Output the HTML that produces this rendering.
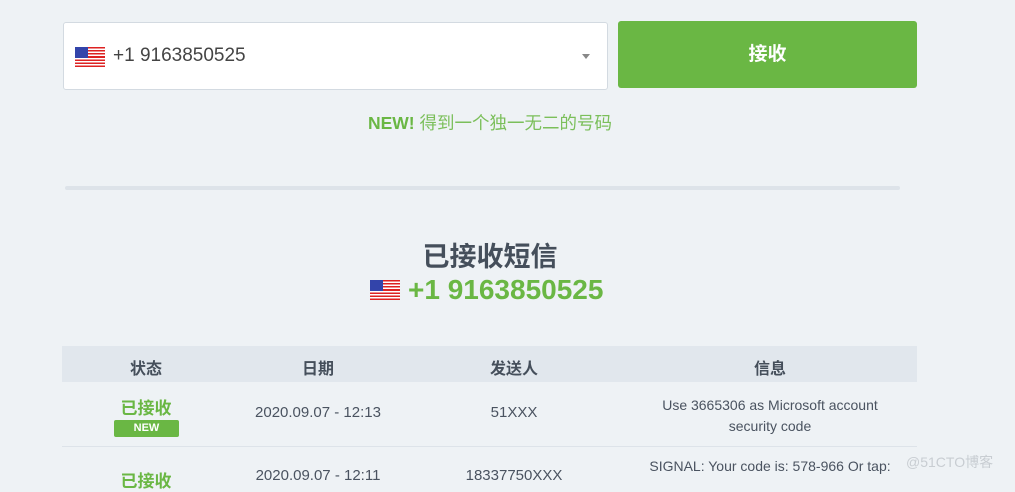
<!DOCTYPE html>
<html><head><meta charset="utf-8"><style>
body{margin:0;width:1015px;height:479px;overflow:hidden;background:#eef2f5;font-family:"Liberation Sans","Noto Sans CJK SC",sans-serif;position:relative;color:#4a5360}
.abs{position:absolute}
.flag{display:inline-block;width:30px;height:20px;background:repeating-linear-gradient(#d22 0 1.54px,#fff 1.54px 3.08px);position:relative}
.flag:before{content:"";position:absolute;left:0;top:0;width:13px;height:11px;background:#3344aa}
.input{left:63px;top:22px;width:543px;height:66px;background:#fff;border:1px solid #d3dae1;border-radius:3px}
.btn{left:618px;top:21px;width:299px;height:67px;background:#6ab744;border-radius:3px;color:#fff;font-weight:bold;font-size:19px;text-align:center;line-height:67px}
</style></head><body>
<div class="abs input">
 <span class="flag abs" style="left:11px;top:24px"></span>
 <span class="abs" style="left:49px;top:22px;font-size:19px;color:#444">+1 9163850525</span>
 <span class="abs" style="left:518px;top:31px;width:0;height:0;border-left:4px solid transparent;border-right:4px solid transparent;border-top:5px solid #888"></span>
</div>
<div class="abs btn">接收</div>
<div class="abs" style="left:0;width:980px;top:110px;text-align:center;font-size:17.5px;color:#7bbf5a"><b style="color:#6ab744">NEW!</b> 得到一个独一无二的号码</div>
<div class="abs" style="left:65px;top:186px;width:835px;height:4px;background:#dde3e9;border-radius:2px"></div>
<div class="abs" style="left:0;width:980px;top:235px;text-align:center;font-size:27px;font-weight:bold;color:#454f5b">已接收短信</div>
<div class="abs" style="left:370px;top:274px;font-size:28px;font-weight:bold;color:#6ab744;white-space:nowrap"><span class="flag" style="vertical-align:-1px;margin-right:8px"></span>+1 9163850525</div>
<div class="abs" style="left:62px;top:346px;width:855px;height:36px;background:#e1e7ed"></div>
<div class="abs" style="left:62px;top:446px;width:855px;height:1px;background:#dde3e9"></div>
<div class="abs" style="left:106px;width:80px;text-align:center;top:355px;font-size:16px;font-weight:bold;color:#454f5b">状态</div>
<div class="abs" style="left:278px;width:80px;text-align:center;top:355px;font-size:16px;font-weight:bold;color:#454f5b">日期</div>
<div class="abs" style="left:474px;width:80px;text-align:center;top:355px;font-size:16px;font-weight:bold;color:#454f5b">发送人</div>
<div class="abs" style="left:730px;width:80px;text-align:center;top:355px;font-size:16px;font-weight:bold;color:#454f5b">信息</div>
<div class="abs" style="left:106px;width:80px;text-align:center;top:394px;font-size:17px;font-weight:bold;color:#6ab744">已接收</div>
<div class="abs" style="left:114px;top:420px;width:65px;height:17px;background:#6ab744;border-radius:2px;color:#fff;font-size:11px;font-weight:bold;text-align:center;line-height:17px">NEW</div>
<div class="abs" style="left:218px;width:200px;text-align:center;top:404px;font-size:15px">2020.09.07 - 12:13</div>
<div class="abs" style="left:464px;width:100px;text-align:center;top:404px;font-size:15px">51XXX</div>
<div class="abs" style="left:620px;width:300px;text-align:center;top:395px;font-size:14px;line-height:21px">Use 3665306 as Microsoft account<br>security code</div>
<div class="abs" style="left:106px;width:80px;text-align:center;top:467px;font-size:17px;font-weight:bold;color:#6ab744">已接收</div>
<div class="abs" style="left:218px;width:200px;text-align:center;top:467px;font-size:15px">2020.09.07 - 12:11</div>
<div class="abs" style="left:444px;width:140px;text-align:center;top:467px;font-size:15px">18337750XXX</div>
<div class="abs" style="left:620px;width:300px;text-align:center;top:458px;font-size:14px">SIGNAL: Your code is: 578-966 Or tap:</div>
<div class="abs" style="left:906px;top:452px;font-size:14px;color:#c8cdd2">@51CTO博客</div>
</body></html>
